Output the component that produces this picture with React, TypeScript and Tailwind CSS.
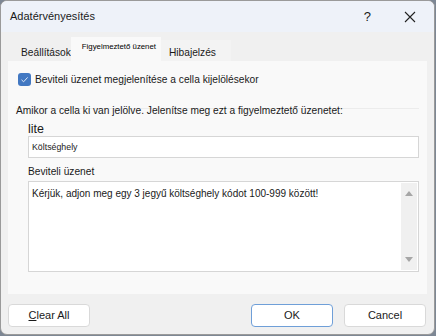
import React from "react";

const font = { fontFamily: '"Liberation Sans", Arial, sans-serif' };

const Tab = ({ label, active, small }: { label: string; active?: boolean; small?: boolean }) => (
  <div
    className={
      active
        ? "h-[24px] pl-[11px] pr-[5px] pt-[4px] bg-[#f9f9f9] text-[7.8px] text-black"
        : small
        ? "h-[21px] pl-[8px] pr-[15px] pt-[5px] text-[10.2px] text-[#1a1a1a] bg-[#f3f3f3]"
        : "h-[21px] pl-[13px] pr-[0px] pt-[5px] text-[10.2px] text-[#1a1a1a]"
    }
  >
    {label}
  </div>
);

const Button = ({ children, primary, className }: { children: React.ReactNode; primary?: boolean; className?: string }) => (
  <button
    className={
      "h-[23px] w-[82px] rounded-[4px] bg-white text-[11px] text-[#1a1a1a] " +
      (primary ? "border border-[#6f9fd8] " : "border border-[#d9d9d9] ") +
      (className || "")
    }
  >
    {children}
  </button>
);

export default function App() {
  return (
    <div className="w-[436px] h-[336px] bg-[#7d8794]" style={font}>
      <div className="w-[435px] h-[335px] flex flex-col rounded-[7px] overflow-hidden border border-[#9a9a9a] bg-[#f0f0f0]">
        {/* title bar */}
        <div className="h-[31px] flex items-center bg-[#eef2f9] pl-[9px] pr-[16px]">
          <span className="text-[11px] text-[#1a1a1a]">Adatérvényesítés</span>
          <span className="ml-auto text-[13px] text-[#1a1a1a] mr-[33px]">?</span>
          <svg width="12" height="12" viewBox="0 0 12 12" className="mr-[2px]">
            <path d="M1 1 L11 11 M11 1 L1 11" stroke="#222" strokeWidth="1.1" />
          </svg>
        </div>

        <div className="flex-1 flex flex-col px-[7px]">
          {/* tabs */}
          <div className="h-[29px] flex items-end">
            <Tab label="Beállítások" />
            <Tab label="Figyelmeztető üzenet" active />
            <Tab label="Hibajelzés" small />
          </div>

          {/* panel */}
          <div className="h-[233px] bg-[#f9f9f9] flex flex-col">
            <div className="flex items-center mt-[11px] ml-[10px]">
              <div className="w-[13px] h-[13px] rounded-[3px] bg-[#4278c2] flex items-center justify-center">
                <svg width="9" height="9" viewBox="0 0 9 9">
                  <path d="M1.5 4.8 L3.6 6.8 L7.6 2.4" stroke="#dfe9f7" strokeWidth="1" fill="none" />
                </svg>
              </div>
              <span className="ml-[4px] text-[10.2px] text-[#1a1a1a]">Beviteli üzenet megjelenítése a cella kijelölésekor</span>
            </div>

            <div className="mt-[21px] ml-[8px] mr-[8px] border-t border-[#ececec]">
              <div className="text-[10.2px] leading-[12px] text-[#1a1a1a] -mt-[4px]">
                Amikor a cella ki van jelölve. Jelenítse meg ezt a figyelmeztető üzenetet:
              </div>
            </div>

            <div className="ml-[20px] mr-[8px] mt-[5px] flex flex-col">
              <span className="text-[12.5px] leading-[14px] text-[#1a1a1a]">lite</span>
              <div className="h-[22px] bg-white border border-[#d6d6d6] flex items-center pl-[3px] text-[8.8px] text-[#1a1a1a]">
                Költséghely
              </div>
              <span className="mt-[7px] text-[10.2px] leading-[13px] text-[#1a1a1a]">Beviteli üzenet</span>
              <div className="mt-[3px] h-[91px] bg-white border border-[#d6d6d6] flex">
                <div className="flex-1 pl-[3px] pt-[4px] text-[10px] text-[#1a1a1a]">
                  Kérjük, adjon meg egy 3 jegyű költséghely kódot 100-999 között!
                </div>
                <div className="w-[16px] my-[1px] mr-[1px] bg-[#f0f0f0] flex flex-col items-center justify-between py-[8px]">
                  <svg width="8" height="5" viewBox="0 0 8 5">
                    <path d="M0 5 L4 0 L8 5 Z" fill="#a6a6a6" />
                  </svg>
                  <svg width="8" height="5" viewBox="0 0 8 5">
                    <path d="M0 0 L4 5 L8 0 Z" fill="#a6a6a6" />
                  </svg>
                </div>
              </div>
            </div>
          </div>

          {/* footer */}
          <div className="flex mt-[10px] pr-[1px]">
            <Button>
              <span className="underline">C</span>lear All
            </Button>
            <Button primary className="ml-auto">
              OK
            </Button>
            <Button className="ml-[11px]">Cancel</Button>
          </div>
        </div>
      </div>
    </div>
  );
}
